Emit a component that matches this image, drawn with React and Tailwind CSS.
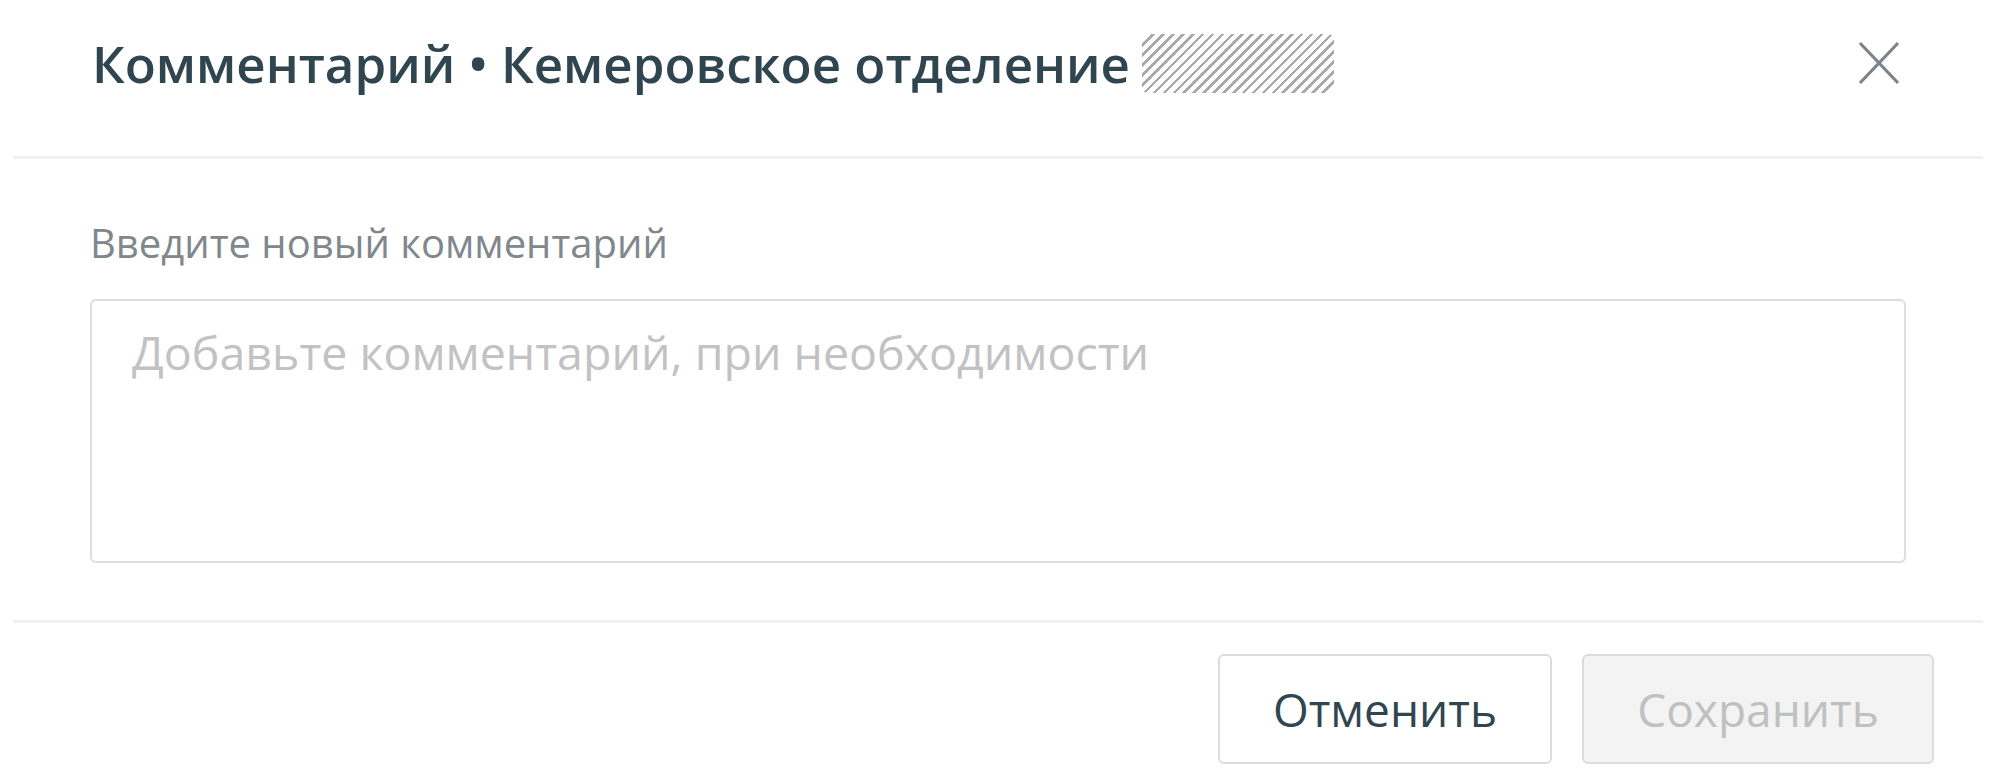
export default function App() {
    return (
        <div className="min-h-screen bg-white font-['Open_Sans',sans-serif]">
            {/* header */}
            <div className="flex h-[156px] items-center justify-between pb-[30px] pl-[92px] pr-[97px]">
                <div className="flex items-center">
                    <h2 className="text-[51px] font-semibold leading-none text-[#2f4550]">
                        Комментарий • Кемеровское отделение
                    </h2>
                    <span className="ml-[12px] h-[59px] w-[192px] rounded-[6px] bg-[repeating-linear-gradient(135deg,#a9a9a9_0px,#a9a9a9_2.5px,transparent_2.5px,transparent_7px)]" />
                </div>
                <button className="flex h-[42px] w-[40px] items-center justify-center text-[#7b848a]">
                    <svg width="40" height="42" viewBox="0 0 40 42" fill="none" stroke="currentColor" strokeWidth="3">
                        <path d="M1 1 L39 41 M39 1 L1 41" />
                    </svg>
                </button>
            </div>
            <div className="mx-[13px] h-[3px] bg-[#f0f0f0]" />

            {/* body */}
            <div className="px-[90px] pt-[64px] pb-[57px]">
                <label htmlFor="comment" className="block text-[40px] leading-none text-[#80878d]">
                    Введите новый комментарий
                </label>
                <textarea
                    id="comment"
                    className="mt-[36px] block h-[264px] w-full resize-none rounded-[6px] border-2 border-[#dedede] px-[40px] pt-[22px] text-[46.5px] leading-tight text-[#2f4550] placeholder:text-[#c2c2c2] focus:outline-none"
                    placeholder="Добавьте комментарий, при необходимости"
                />
            </div>
            <div className="mx-[13px] h-[3px] bg-[#f0f0f0]" />

            {/* footer */}
            <div className="flex justify-end gap-[30px] pt-[31px] pr-[62px]">
                <button className="h-[110px] w-[334px] rounded-[6px] border-2 border-[#dcdcdc] bg-white text-[46px] text-[#2f4550]">
                    Отменить
                </button>
                <button
                    disabled
                    className="h-[110px] w-[352px] rounded-[6px] border-2 border-[#dcdcdc] bg-[#f3f3f3] text-[46px] text-[#c0c0c0]"
                >
                    Сохранить
                </button>
            </div>
        </div>
    );
}
